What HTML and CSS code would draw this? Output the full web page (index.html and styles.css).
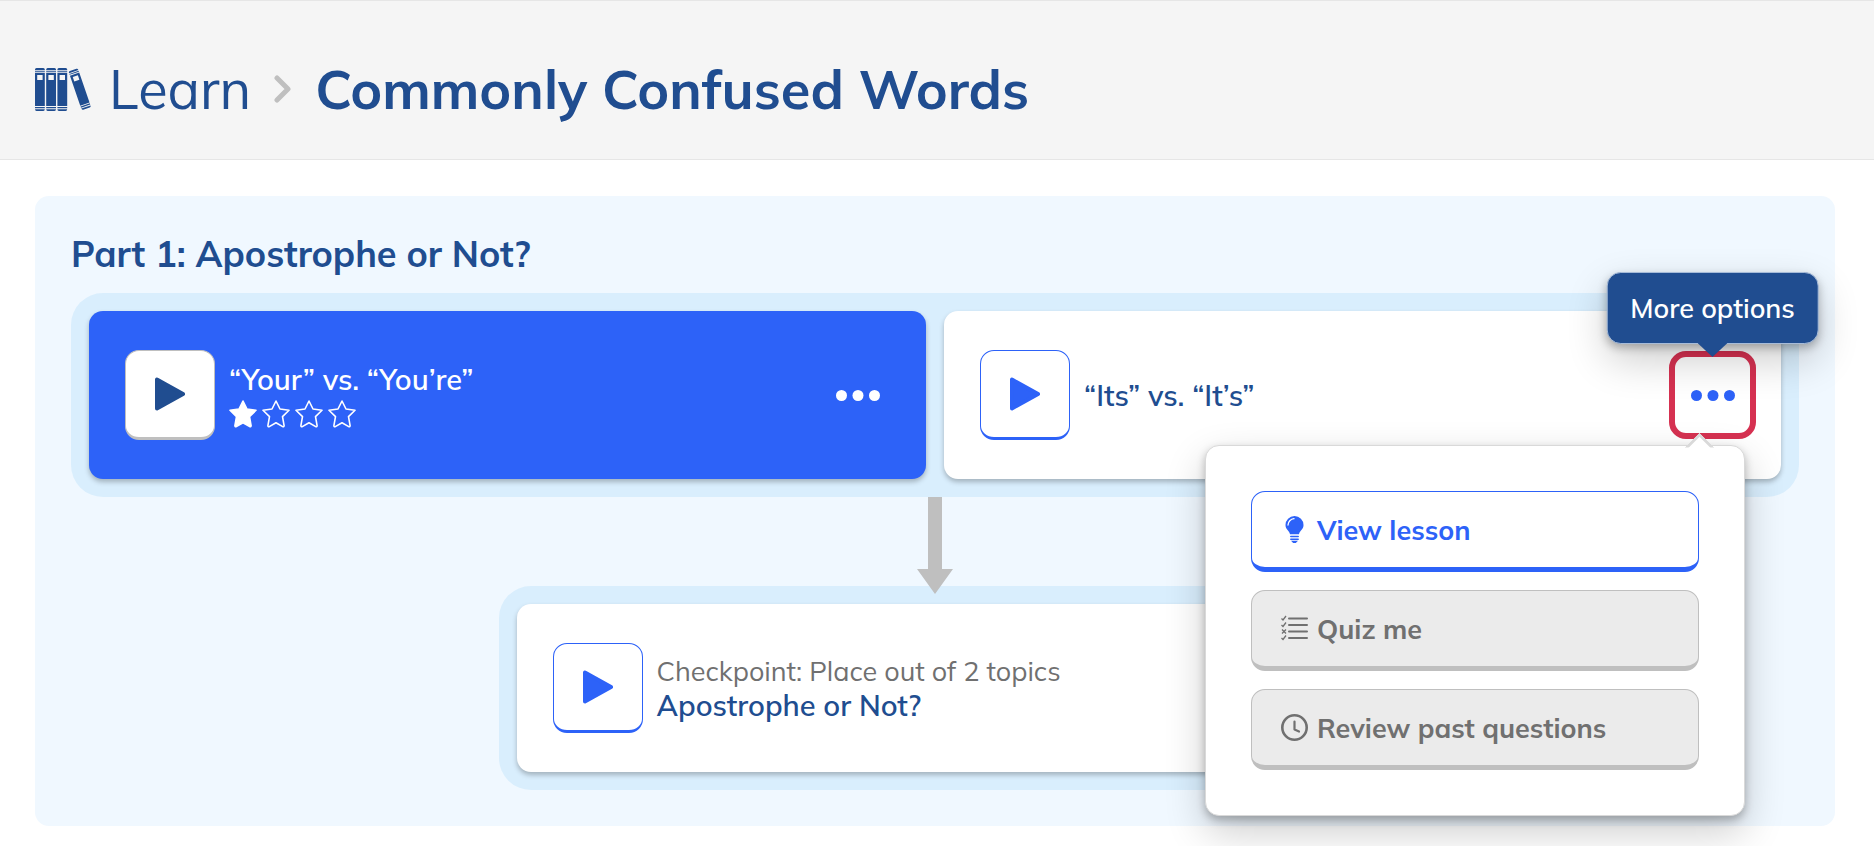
FILE: index.html
```html
<!DOCTYPE html>
<html lang="en">

<head>
  <meta charset="UTF-8" />
  <meta name="viewport" content="width=device-width, initial-scale=1.0" />
  <title>Commonly Confused Words</title>
  <link rel="stylesheet" href="styles.css">
</head>

<body>
  <!-- shared icons -->
  <svg class="sprite" aria-hidden="true">
    <symbol id="i-play" viewBox="0 0 31 34">
      <path d="M2 2v30l27-15z" fill="currentColor" stroke="currentColor" stroke-width="4" stroke-linejoin="round" />
    </symbol>
    <symbol id="i-dots" viewBox="0 0 44 11">
      <g fill="currentColor">
        <circle cx="5.5" cy="5.5" r="5.5" />
        <circle cx="22" cy="5.5" r="5.5" />
        <circle cx="38.5" cy="5.5" r="5.5" />
      </g>
    </symbol>
    <symbol id="i-star" viewBox="0 0 28 28">
      <path d="M14 1l4 8 9 1.300-6.500 6.300 1.600 9c.1.900-.6 1.500-1.400 1L14 22.800l-6.700 3.800c-.8.5-1.500-.1-1.400-1l1.600-9L1 10.300 10 9z" stroke="currentColor" stroke-width="1.600" stroke-linejoin="round" />
    </symbol>
  </svg>

  <header class="page-header">
    <nav class="breadcrumb" aria-label="Breadcrumb">
      <a class="learn-link" href="#">
        <svg class="books" viewBox="0 0 56 43" aria-hidden="true">
          <defs>
            <g id="book">
              <path d="M0 2V1.500Q0 0 1.500 0h6.800Q9.800 0 9.800 1.500V2zM0 2.800h9.800v.9H0zM0 4.700h9.800V38H0zM0 39h9.800v1.300H0zM0 41.300h9.800q0 1.700-1.500 1.700H1.500Q0 43 0 41.300z" fill="currentColor" />
              <path d="M2.200 7h5.400v5H2.200z" fill="#f5f5f5" />
            </g>
          </defs>
          <use href="#book" />
          <use href="#book" x="11.200" />
          <use href="#book" x="22.400" />
          <use href="#book" transform="translate(33.500 3.500) rotate(-19) scale(1 .95)" />
        </svg>
        Learn
      </a>
      <svg class="chevron" viewBox="0 0 18 28" aria-hidden="true">
        <path d="M3 3l11 11L3 25" fill="none" stroke="currentColor" stroke-width="5" stroke-linecap="round" stroke-linejoin="round" />
      </svg>
      <h1>Commonly Confused Words</h1>
    </nav>
  </header>

  <main>
    <section class="part">
      <h2>Part 1: Apostrophe or Not?</h2>

      <div class="row">
        <article class="card card-active">
          <button class="play" aria-label="Start"><svg><use href="#i-play" /></svg></button>
          <div class="info">
            <h3>“Your” vs. “You’re”</h3>
            <div class="stars" role="img" aria-label="1 of 4 stars">
              <svg class="full"><use href="#i-star" /></svg>
              <svg><use href="#i-star" /></svg>
              <svg><use href="#i-star" /></svg>
              <svg><use href="#i-star" /></svg>
            </div>
          </div>
          <div class="more">
            <button class="more-btn" aria-label="More options"><svg><use href="#i-dots" /></svg></button>
          </div>
        </article>

        <article class="card">
          <button class="play" aria-label="Start"><svg><use href="#i-play" /></svg></button>
          <div class="info">
            <h3>“Its” vs. “It’s”</h3>
          </div>
          <div class="more">
            <button class="more-btn focused" aria-label="More options"><svg><use href="#i-dots" /></svg></button>
            <div class="tooltip" role="tooltip">More options</div>
            <div class="popover">
              <button class="option">
                <svg viewBox="0 0 27 27" aria-hidden="true">
                  <path d="M13.5 0a9 9 0 0 0-9 9.200c0 4.300 4 5.300 4.500 9.100h9c.5-3.800 4.500-4.800 4.500-9.100a9 9 0 0 0-9-9.200z" fill="currentColor" />
                  <path d="M7 9a6.500 6.500 0 0 1 6-6.300" fill="none" stroke="#fff" stroke-width="1.300" stroke-linecap="round" />
                  <path d="M9.800 20.600h7.400M9.800 23.200h7.400" stroke="currentColor" stroke-width="1.500" stroke-linecap="round" />
                  <path d="M10 24.800h7L14.800 27h-2.600z" fill="currentColor" />
                </svg>
                View lesson
              </button>
              <button class="option" disabled>
                <svg viewBox="0 0 27 27" fill="none" stroke="currentColor" aria-hidden="true">
                  <path d="M8 3.500h18M8 10h18M8 16.500h18M8 23h18" stroke-width="2" stroke-linecap="round" />
                  <path d="M.5 3.500L2 5l3-4M.5 10L2 11.500l3-4M1 14.500l4 4M5 14.500l-4 4M.5 23L2 24.500l3-4" stroke-width="1.300" />
                </svg>
                Quiz me
              </button>
              <button class="option" disabled>
                <svg viewBox="0 0 27 27" fill="none" stroke="currentColor" aria-hidden="true">
                  <circle cx="13.5" cy="13.5" r="12.2" stroke-width="2.600" />
                  <path d="M13.500 7.500v8l4.500 2" stroke-width="2.200" stroke-linecap="round" stroke-linejoin="round" />
                </svg>
                Review past questions
              </button>
            </div>
          </div>
        </article>
      </div>

      <svg class="arrow" viewBox="0 0 36 97" aria-hidden="true">
        <path d="M11 0h14v72h11L18 97 0 72h11z" fill="currentColor" />
      </svg>

      <div class="row row-single">
        <article class="card">
          <button class="play" aria-label="Start"><svg><use href="#i-play" /></svg></button>
          <div class="info">
            <p>Checkpoint: Place out of 2 topics</p>
            <h3>Apostrophe or Not?</h3>
          </div>
        </article>
      </div>
    </section>
  </main>
</body>

</html>
```
FILE: styles.css
```css
* {
  box-sizing: border-box;
}

body {
  margin: 0;
  background: #fff;
  color: #204d90;
  font-family: Mulish, Lato, sans-serif;
  font-size: 27px;
  line-height: 34px;
}

h1,
h2,
h3,
p {
  margin: 0;
}

button {
  font: inherit;
  cursor: pointer;
}

svg {
  display: block;
  flex: none;
}

.sprite {
  position: absolute;
  width: 0;
  height: 0;
}

/* header */

.page-header {
  padding: 53px 35px 35px;
  background: #f5f5f5;
  border-top: 1px solid #e6e6e6;
  border-bottom: 1px solid #e6e6e6;
}

.breadcrumb {
  display: flex;
  align-items: center;
  gap: 23px;
  font-size: 54px;
  line-height: 70px;
}

.learn-link {
  display: flex;
  align-items: center;
  gap: 18px;
  color: inherit;
  text-decoration: none;
}

.books {
  width: 56px;
  height: 43px;
}

.chevron {
  width: 18px;
  height: 28px;
  color: #bfbfbf;
}

h1 {
  font-size: 54px;
  font-weight: 700;
}

/* part panel */

main {
  padding: 36px 39px 20px 35px;
}

.part {
  padding: 36px;
  background: #f0f8ff;
  border-radius: 14px;
}

h2 {
  margin-bottom: 18px;
  font-size: 36px;
  line-height: 43px;
}

.row {
  display: flex;
  gap: 18px;
  padding: 18px;
  background: #d9eefd;
  border-radius: 32px;
}

.row-single {
  width: calc(50% + 9px);
  margin: 0 auto;
}

/* the arrow head runs over the edge of the next row */
.arrow {
  position: relative;
  width: 36px;
  height: 97px;
  margin: 0 auto -8px;
  color: #bfbfbf;
}

.card {
  flex: 1;
  display: flex;
  align-items: center;
  gap: 14px;
  min-height: 168px;
  padding: 36px;
  background: #fff;
  border-radius: 14px;
  box-shadow: 0 3px 5px rgba(0, 0, 0, 0.25);
}

.card-active {
  background: #2d62f8;
  color: #fff;
}

.info {
  flex: 1;
}

.info p {
  color: #707070;
}

h3 {
  font-size: 29px;
  font-weight: 600;
  line-height: 34px;
}

.play {
  display: flex;
  justify-content: center;
  align-items: center;
  width: 90px;
  height: 90px;
  padding: 0;
  background: #fff;
  border: 1px solid #2d62f8;
  border-bottom-width: 3px;
  border-radius: 14px;
  color: #2d62f8;
}

.play svg {
  width: 30px;
  height: 34px;
}

.card-active .play {
  border-color: #bfbfbf;
  color: #204d90;
}

.stars {
  display: flex;
  gap: 5px;
  padding-top: 4px;
}

.stars svg {
  width: 28px;
  height: 28px;
  fill: none;
}

.stars .full {
  fill: currentColor;
}

/* more options */

.more {
  position: relative;
}

.more-btn {
  display: flex;
  justify-content: center;
  align-items: center;
  width: 65px;
  height: 66px;
  padding: 0;
  background: none;
  border: none;
  border-radius: 6px;
  color: #2d62f8;
}

.card-active .more-btn {
  color: #fff;
}

.more-btn svg {
  width: 44px;
  height: 11px;
}

.more-btn.focused {
  outline: 6px solid #d63151;
  outline-offset: 5px;
}

.tooltip {
  position: absolute;
  bottom: calc(100% + 18px);
  left: 50%;
  transform: translateX(-50%);
  z-index: 3;
  padding: 18px 23px;
  background: #204d90;
  border: 1px solid #a6bbd8;
  border-radius: 14px;
  color: #fff;
  font-weight: 600;
  white-space: nowrap;
  box-shadow: 0 4px 8px rgba(0, 0, 0, 0.25), 0 16px 40px rgba(0, 0, 0, 0.2);
}

.tooltip::after {
  content: "";
  position: absolute;
  top: 100%;
  left: 50%;
  width: 30px;
  height: 14px;
  margin-left: -15px;
  background: #204d90;
  clip-path: polygon(0 0, 100% 0, 50% 100%);
}

.popover {
  position: absolute;
  top: calc(100% + 17px);
  right: 0;
  z-index: 2;
  display: flex;
  flex-direction: column;
  gap: 18px;
  width: 540px;
  padding: 45px;
  background: #fff;
  border: 1px solid #d9d9d9;
  border-radius: 14px;
  box-shadow: 0 4px 8px rgba(0, 0, 0, 0.25), 0 16px 40px rgba(0, 0, 0, 0.2);
}

.popover::before {
  content: "";
  position: absolute;
  top: -9px;
  right: 34px;
  width: 18px;
  height: 18px;
  background: #fff;
  border: 3px solid #d9d9d9;
  border-width: 3px 0 0 3px;
  transform: rotate(45deg);
  clip-path: polygon(0 0, 100% 0, 0 100%);
}

.option {
  display: flex;
  align-items: center;
  gap: 9px;
  height: 81px;
  padding: 0 29px;
  background: #fff;
  border: 1px solid #2d62f8;
  border-bottom-width: 5px;
  border-radius: 14px;
  color: #2d62f8;
  font-weight: 700;
}

.option svg {
  width: 27px;
  height: 27px;
}

.option:disabled {
  background: #ebebeb;
  border-color: #bfbfbf;
  color: #707070;
  cursor: default;
}
```
